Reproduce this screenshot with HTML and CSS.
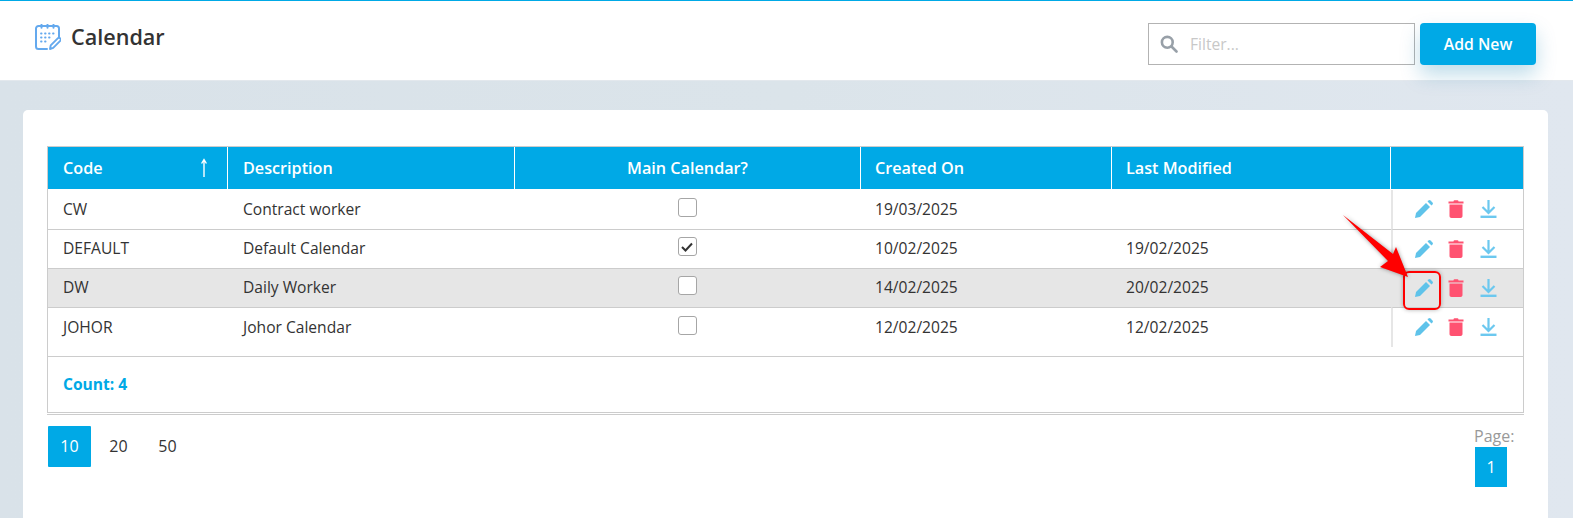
FILE: index.html
```html
<!DOCTYPE html>
<html lang="en">
<head>
<meta charset="utf-8">
<title>Calendar</title>
<link rel="stylesheet" href="styles.css">
</head>
<body>
<header class="topbar">
  <h1 class="title">
    <svg class="title-icon" viewBox="0 0 26 26" fill="none" stroke="#64a9ee" stroke-width="2" stroke-linecap="round" stroke-linejoin="round">
      <path d="M12 25H3.500A2.500 2.500 0 0 1 1 22.500V4.500A2.500 2.500 0 0 1 3.500 2h18A2.500 2.500 0 0 1 24 4.500V13"/>
      <path d="M6.500 .8v3M12.500 .8v3M18.500 .8v3"/>
      <path d="M6 9.500h.6M10 9.500h.6M14 9.500h.6M18 9.500h.6M6 13.500h.6M10 13.500h.6M14 13.500h.6M6 17.500h.6M10 17.500h.6" stroke-width="1.800"/>
      <path d="M15 25l.7-3.600 7-7a1.700 1.700 0 0 1 2.500 2.500l-7 7z" stroke-width="1.900"/>
    </svg>
    <span>Calendar</span>
  </h1>
  <div class="tools">
    <label class="filter">
      <svg class="filter-icon" viewBox="0 0 18 18" fill="none" stroke="#98a0a8" stroke-width="2.600" stroke-linecap="round"><circle cx="7.300" cy="7.300" r="5.400"/><path d="M11.500 11.500l5 5"/></svg>
      <input class="filter-input" type="text" placeholder="Filter...">
    </label>
    <button class="add-btn" type="button">Add New</button>
  </div>
</header>

<main class="page">
  <section class="card">
    <div class="grid">
      <div class="grid-body">
        <table class="data">
          <colgroup>
            <col class="c1"><col class="c2"><col class="c3"><col class="c4"><col class="c5"><col class="c6">
          </colgroup>
          <thead>
            <tr>
              <th><div class="sort-head"><span>Code</span><svg class="sort-icon" viewBox="0 0 10 20" fill="none" stroke="#fff" stroke-width="1.400"><path d="M5 19V2M2.600 5.500L5 1.500l2.400 4"/></svg></div></th>
              <th>Description</th>
              <th class="center">Main Calendar?</th>
              <th class="date">Created On</th>
              <th class="date">Last Modified</th>
              <th></th>
            </tr>
          </thead>
          <tbody>
            <tr>
              <td>CW</td><td>Contract worker</td>
              <td class="center"><span class="check"></span></td>
              <td class="date">19/03/2025</td><td class="date"></td>
              <td class="actions"><div class="action-set">
                <svg class="ic-edit" viewBox="0 0 18 18"><path d="M0 18l1-5L11 3l4 4L5 17z"/><path d="M12.500 1.500l1-1a1.500 1.500 0 0 1 2 0l2 2a1.500 1.500 0 0 1 0 2l-1 1z"/></svg>
                <svg class="ic-trash" viewBox="0 0 16 18"><path d="M5.500 1.600C5.500.6 6 .2 7 .2h2c1 0 1.500.4 1.500 1.400H15.500v1.800H.5V1.600z"/><path d="M1.500 4.600h13V16c0 1.200-.8 2-2 2h-9c-1.200 0-2-.8-2-2z"/></svg>
                <svg class="ic-down" viewBox="0 0 17 18" fill="none" stroke="#6cc8ef"><path d="M8.500 0v12.500M2.500 7l6 6 6-6" stroke-width="2.200"/><path d="M.5 16.800h16" stroke-width="2.400"/></svg>
              </div></td>
            </tr>
            <tr>
              <td>DEFAULT</td><td>Default Calendar</td>
              <td class="center"><span class="check"><svg class="tick" viewBox="0 0 12 10" fill="none" stroke="#333" stroke-width="2"><path d="M1 5l3.500 3.500L11 1.500"/></svg></span></td>
              <td class="date">10/02/2025</td><td class="date">19/02/2025</td>
              <td class="actions"><div class="action-set">
                <svg class="ic-edit" viewBox="0 0 18 18"><path d="M0 18l1-5L11 3l4 4L5 17z"/><path d="M12.500 1.500l1-1a1.500 1.500 0 0 1 2 0l2 2a1.500 1.500 0 0 1 0 2l-1 1z"/></svg>
                <svg class="ic-trash" viewBox="0 0 16 18"><path d="M5.500 1.600C5.500.6 6 .2 7 .2h2c1 0 1.500.4 1.500 1.400H15.500v1.800H.5V1.600z"/><path d="M1.500 4.600h13V16c0 1.200-.8 2-2 2h-9c-1.200 0-2-.8-2-2z"/></svg>
                <svg class="ic-down" viewBox="0 0 17 18" fill="none" stroke="#6cc8ef"><path d="M8.500 0v12.500M2.500 7l6 6 6-6" stroke-width="2.200"/><path d="M.5 16.800h16" stroke-width="2.400"/></svg>
              </div></td>
            </tr>
            <tr class="selected">
              <td>DW</td><td>Daily Worker</td>
              <td class="center"><span class="check"></span></td>
              <td class="date">14/02/2025</td><td class="date">20/02/2025</td>
              <td class="actions"><div class="action-set">
                <svg class="ic-edit" viewBox="0 0 18 18"><path d="M0 18l1-5L11 3l4 4L5 17z"/><path d="M12.500 1.500l1-1a1.500 1.500 0 0 1 2 0l2 2a1.500 1.500 0 0 1 0 2l-1 1z"/></svg>
                <svg class="ic-trash" viewBox="0 0 16 18"><path d="M5.500 1.600C5.500.6 6 .2 7 .2h2c1 0 1.500.4 1.500 1.400H15.500v1.800H.5V1.600z"/><path d="M1.500 4.600h13V16c0 1.200-.8 2-2 2h-9c-1.200 0-2-.8-2-2z"/></svg>
                <svg class="ic-down" viewBox="0 0 17 18" fill="none" stroke="#6cc8ef"><path d="M8.500 0v12.500M2.500 7l6 6 6-6" stroke-width="2.200"/><path d="M.5 16.800h16" stroke-width="2.400"/></svg>
              </div></td>
            </tr>
            <tr>
              <td>JOHOR</td><td>Johor Calendar</td>
              <td class="center"><span class="check"></span></td>
              <td class="date">12/02/2025</td><td class="date">12/02/2025</td>
              <td class="actions"><div class="action-set">
                <svg class="ic-edit" viewBox="0 0 18 18"><path d="M0 18l1-5L11 3l4 4L5 17z"/><path d="M12.500 1.500l1-1a1.500 1.500 0 0 1 2 0l2 2a1.500 1.500 0 0 1 0 2l-1 1z"/></svg>
                <svg class="ic-trash" viewBox="0 0 16 18"><path d="M5.500 1.600C5.500.6 6 .2 7 .2h2c1 0 1.500.4 1.500 1.400H15.500v1.800H.5V1.600z"/><path d="M1.500 4.600h13V16c0 1.200-.8 2-2 2h-9c-1.200 0-2-.8-2-2z"/></svg>
                <svg class="ic-down" viewBox="0 0 17 18" fill="none" stroke="#6cc8ef"><path d="M8.500 0v12.500M2.500 7l6 6 6-6" stroke-width="2.200"/><path d="M.5 16.800h16" stroke-width="2.400"/></svg>
              </div></td>
            </tr>
          </tbody>
        </table>
      </div>
      <div class="count">Count: 4</div>
    </div>
    <div class="pager">
      <div class="sizes">
        <span class="size active">10</span>
        <span class="size">20</span>
        <span class="size">50</span>
      </div>
      <div class="pages">
        <span class="page-label">Page:</span>
        <span class="page-num">1</span>
      </div>
    </div>
  </section>
</main>

<div class="callout-box"></div>
<svg class="callout-arrow" viewBox="0 0 80 80"><path d="M3 4L53 43 56 36 68 66 40 56 48 50z"/></svg>
</body>
</html>
```
FILE: styles.css
```css
* { box-sizing: border-box; }
html, body { margin: 0; height: 518px; overflow: hidden; }
body {
  position: relative;
  display: flex;
  flex-direction: column;
  background: linear-gradient(90deg, #d9e2e9, #dbe4ea 50%, #e0e7ef);
  font-family: "Open Sans", "Noto Sans", sans-serif;
  font-size: 15.6px;
  color: #333;
}
.topbar {
  position: relative;
  z-index: 2;
  flex: none;
  height: 81px;
  display: flex;
  justify-content: space-between;
  align-items: flex-start;
  background: #fff;
  border-top: 1px solid #00a9e6;
  border-bottom: 1px solid #e3e8ed;
  padding: 21px 37px 0 35px;
}
.title {
  margin: 0;
  display: flex;
  align-items: center;
  gap: 10px;
  font-size: 21.600px;
  font-weight: 600;
  line-height: 30px;
  color: #333;
}
.title-icon { width: 26px; height: 26px; }
.tools { display: flex; gap: 5px; padding-top: 1px; }
.filter {
  width: 267px;
  height: 42px;
  display: flex;
  align-items: center;
  gap: 12px;
  padding-left: 11px;
  border: 1px solid #b3b3b3;
  background: #fff;
}
.filter-icon { width: 18px; height: 18px; flex: none; }
.filter-input {
  border: 0;
  outline: 0;
  flex: 1;
  min-width: 0;
  padding: 0;
  font: 15.6px "Open Sans", sans-serif;
  background: transparent;
}
.filter-input::placeholder { color: #c8c8c8; opacity: 1; }
.add-btn {
  width: 116px;
  height: 42px;
  border: 0;
  border-radius: 4px;
  background: #00a9e6;
  color: #fff;
  font: 600 15.800px "Open Sans", sans-serif;
  box-shadow: 0 10px 20px rgba(0, 120, 170, .25);
}
.page { flex: 1; padding: 29px 25px 0 23px; min-height: 0; }
.card {
  height: 100%;
  background: #fff;
  border-radius: 5px 5px 0 0;
  padding: 36px 24px 0;
}
.grid {
  border: 1px solid #ccc;
  box-shadow: 0 1px 0 #fff, 0 2px 0 #ccc;
}
.grid-body { height: 209px; }
.data {
  width: 100%;
  border-collapse: separate;
  border-spacing: 0;
  table-layout: fixed;
}
.c1 { width: 180px; }
.c2 { width: 287px; }
.c3 { width: 346px; }
.c4 { width: 251px; }
.c5 { width: 279px; }
.c6 { width: 132px; }
.data th {
  height: 43px;
  padding: 0 15px;
  background: #00a9e6;
  background-clip: padding-box;
  color: #fff;
  font-weight: 600;
  font-size: 16.200px;
  text-align: left;
  border-right: 1px solid #fff;
  border-bottom: 1px solid #fff;
}
.data th:last-child { border-right: 0; }
.sort-head { display: flex; justify-content: space-between; align-items: center; }
.sort-icon { width: 10px; height: 20px; margin-right: 3px; }
.data td {
  height: 39px;
  padding: 0 15px 2px;
  border-bottom: 1px solid #ccc;
  white-space: nowrap;
}
.data tbody tr:first-child td { height: 40px; }
.data tbody tr:last-child td { border-bottom: 0; }
.data .center { text-align: center; }
.data .date { padding-left: 14px; }
.selected td { background: #e6e6e6; }
.data td.actions {
  padding: 0 0 1px;
  border-left: 2px solid #e6e6e6;
}
.action-set {
  display: flex;
  align-items: center;
  gap: 15px;
  padding-left: 22px;
}
.ic-edit { width: 18px; height: 18px; fill: #5fc3ea; }
.ic-trash { width: 16px; height: 18px; fill: #ff5271; }
.ic-down { width: 17px; height: 18px; margin-left: 1px; }
.check {
  display: inline-flex;
  align-items: center;
  justify-content: center;
  width: 19px;
  height: 19px;
  vertical-align: middle;
  background: #fff;
  border: 1px solid #a6a6a6;
  border-radius: 3px;
  position: relative;
  top: -3px;
  left: -1px;
}
.tick { width: 12px; height: 10px; }
.count {
  height: 56px;
  display: flex;
  align-items: center;
  padding: 0 0 2px 15px;
  border-top: 1px solid #ccc;
  color: #00a9e6;
  font-weight: 700;
}
.pager {
  display: flex;
  justify-content: space-between;
  align-items: flex-start;
  padding: 13px 17px 0 1px;
}
.sizes { display: flex; gap: 6px; }
.size {
  width: 43px;
  height: 41px;
  display: flex;
  align-items: center;
  justify-content: center;
  padding-bottom: 2px;
  border-radius: 1px;
  color: #333;
  font-size: 16px;
}
.size.active { background: #00a9e6; color: #fff; }
.pages { display: flex; flex-direction: column; align-items: flex-start; width: 32px; }
.page-label { color: #999; line-height: 21px; font-size: 16px; white-space: nowrap; margin-left: -1px; }
.page-num {
  width: 32px;
  height: 40px;
  display: flex;
  align-items: center;
  justify-content: center;
  background: #00a9e6;
  color: #fff;
  font-size: 16px;
}
.callout-box {
  position: absolute;
  left: 1403px;
  top: 271px;
  width: 38px;
  height: 39px;
  border: 2px solid #f00;
  border-radius: 6px;
  box-shadow: 0 0 4px rgba(0, 0, 0, .3);
  z-index: 3;
}
.callout-arrow {
  position: absolute;
  left: 1340px;
  top: 211px;
  width: 80px;
  height: 80px;
  fill: #f00;
  filter: drop-shadow(0 0 2px rgba(0, 0, 0, .4));
  z-index: 4;
}
```
